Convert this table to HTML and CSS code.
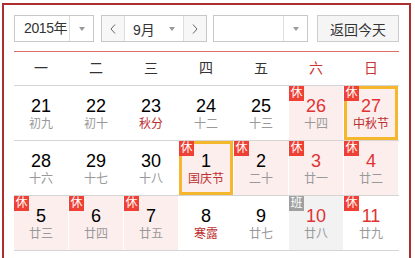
FILE: index.html
```html
<!DOCTYPE html>
<html lang="zh-CN">
<head>
<meta charset="utf-8">
<title>万年历</title>
<link rel="stylesheet" href="styles.css">
</head>
<body>
<div class="cal">
  <div class="toolbar">
    <div class="sel sel-year"><span class="sel-text">2015年</span><span class="sel-arrow"></span></div>
    <div class="month-group">
      <span class="nav"><svg width="6" height="10" viewBox="0 0 6 10"><polyline points="5,0.5 1,5 5,9.5" fill="none" stroke="#666" stroke-width="1"/></svg></span>
      <div class="sel-month"><span>9月</span><span class="tri"></span></div>
      <span class="nav"><svg width="6" height="10" viewBox="0 0 6 10"><polyline points="1,0.5 5,5 1,9.5" fill="none" stroke="#666" stroke-width="1"/></svg></span>
    </div>
    <div class="sel sel-holiday"><span class="sel-text"></span><span class="sel-arrow"></span></div>
    <button class="today">返回今天</button>
  </div>
  <div class="weekdays">
    <span>一</span><span>二</span><span>三</span><span>四</span><span>五</span><span class="we">六</span><span class="we">日</span>
  </div>
  <div class="week">
    <div class="day"><span class="num">21</span><span class="lunar">初九</span></div>
    <div class="day"><span class="num">22</span><span class="lunar">初十</span></div>
    <div class="day fest"><span class="num">23</span><span class="lunar">秋分</span></div>
    <div class="day"><span class="num">24</span><span class="lunar">十二</span></div>
    <div class="day"><span class="num">25</span><span class="lunar">十三</span></div>
    <div class="day rest red"><span class="badge">休</span><span class="num">26</span><span class="lunar">十四</span></div>
    <div class="day rest red fest picked"><span class="badge">休</span><span class="num">27</span><span class="lunar">中秋节</span></div>
  </div>
  <div class="week">
    <div class="day"><span class="num">28</span><span class="lunar">十六</span></div>
    <div class="day"><span class="num">29</span><span class="lunar">十七</span></div>
    <div class="day"><span class="num">30</span><span class="lunar">十八</span></div>
    <div class="day rest fest picked"><span class="badge">休</span><span class="num">1</span><span class="lunar">国庆节</span></div>
    <div class="day rest"><span class="badge">休</span><span class="num">2</span><span class="lunar">二十</span></div>
    <div class="day rest red"><span class="badge">休</span><span class="num">3</span><span class="lunar">廿一</span></div>
    <div class="day rest red"><span class="badge">休</span><span class="num">4</span><span class="lunar">廿二</span></div>
  </div>
  <div class="week">
    <div class="day rest"><span class="badge">休</span><span class="num">5</span><span class="lunar">廿三</span></div>
    <div class="day rest"><span class="badge">休</span><span class="num">6</span><span class="lunar">廿四</span></div>
    <div class="day rest"><span class="badge">休</span><span class="num">7</span><span class="lunar">廿五</span></div>
    <div class="day fest"><span class="num">8</span><span class="lunar">寒露</span></div>
    <div class="day"><span class="num">9</span><span class="lunar">廿七</span></div>
    <div class="day work red"><span class="badge ban">班</span><span class="num">10</span><span class="lunar">廿八</span></div>
    <div class="day red"><span class="badge">休</span><span class="num">11</span><span class="lunar">廿九</span></div>
  </div>
</div>
</body>
</html>
```

FILE: styles.css
```css
body {
  margin: 0;
  background: #fff;
  font-family: "Liberation Sans", "Noto Sans CJK SC", sans-serif;
  color: #333;
}

.cal {
  margin: 3px 0 0 2px;
  width: 409px;
  box-sizing: border-box;
  border: 2px solid #ad2e2e;
  padding: 10px 10px 10px 10px;
}

.toolbar {
  display: flex;
  height: 27px;
  padding-bottom: 9px;
  border-bottom: 1px solid #dc6e6e;
}

.sel {
  display: flex;
  box-sizing: border-box;
  height: 27px;
  border: 1px solid #c8c8c8;
  background: #fff;
}

.sel-year {
  width: 80px;
  margin-right: 7px;
}

.sel-holiday {
  width: 95px;
  margin-right: 9px;
}

.sel-text {
  flex: 1;
  min-width: 0;
  padding-left: 9px;
  font-size: 14px;
  line-height: 25px;
  color: #333;
  white-space: nowrap;
  letter-spacing: -0.4px;
}

.sel-arrow {
  width: 23px;
  flex: none;
  border-left: 1px solid #ddd;
  display: flex;
  align-items: center;
  justify-content: center;
}

.sel-arrow::after,
.tri::after {
  content: "";
  display: block;
  border-left: 3px solid transparent;
  border-right: 3px solid transparent;
  border-top: 4px solid #999;
}

.month-group {
  display: flex;
  box-sizing: border-box;
  width: 106px;
  height: 27px;
  border: 1px solid #c8c8c8;
  margin-right: 6px;
}

.nav {
  width: 22px;
  background: #f7f7f7;
  display: flex;
  align-items: center;
  justify-content: center;
}

.sel-month {
  width: 60px;
  box-sizing: border-box;
  border-left: 1px solid #ddd;
  border-right: 1px solid #ddd;
  background: #fff;
  display: flex;
  align-items: center;
  justify-content: space-between;
  padding: 0 8px 0 8px;
  font-size: 14px;
  color: #333;
  white-space: nowrap;
}

.today {
  width: 82px;
  height: 27px;
  box-sizing: border-box;
  border: 1px solid #ccc;
  background: #f5f5f5;
  font-family: inherit;
  font-size: 14px;
  color: #333;
  padding: 0;
}

.weekdays {
  display: grid;
  grid-template-columns: repeat(7, 54px);
  column-gap: 1px;
  height: 33px;
  line-height: 33px;
  text-align: center;
  font-size: 14px;
  color: #333;
  border-bottom: 1px solid #d5d5d5;
}

.weekdays .we {
  color: #c33;
}

.week {
  display: grid;
  grid-template-columns: repeat(7, 54px);
  column-gap: 1px;
  border-bottom: 1px solid #d5d5d5;
}

.day {
  position: relative;
  height: 54px;
  box-sizing: border-box;
  text-align: center;
  padding-top: 10px;
}

.num {
  display: block;
  font-size: 18px;
  line-height: 20px;
  color: #000;
}

.lunar {
  display: block;
  font-size: 12px;
  line-height: 16px;
  color: #999;
}

.rest {
  background: #fdeeee;
}

.work {
  background: #f2f2f2;
}

.red .num {
  color: #e03333;
}

.fest .lunar {
  color: #bd2f2f;
}

.picked {
  border: 3px solid #f5b72e;
  padding-top: 7px;
}

.badge {
  position: absolute;
  left: 0;
  top: 0;
  width: 15px;
  height: 15px;
  background: #ef4035;
  color: #fff;
  font-size: 12px;
  line-height: 15px;
  text-align: center;
}

.picked .badge {
  left: -3px;
  top: -3px;
}

.badge.ban {
  background: #a0a0a0;
}
```
